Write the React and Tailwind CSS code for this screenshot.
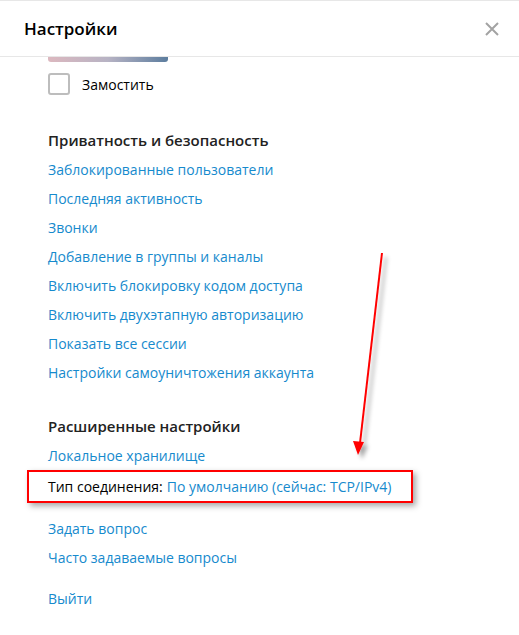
import React from "react";

const privacyLinks = [
  "Заблокированные пользователи",
  "Последняя активность",
  "Звонки",
  "Добавление в группы и каналы",
  "Включить блокировку кодом доступа",
  "Включить двухэтапную авторизацию",
  "Показать все сессии",
  "Настройки самоуничтожения аккаунта",
];

const Link = ({ children, className = "" }) => (
  <div className={`h-[29px] flex items-center text-[14px] text-[#168acd] ${className}`}>
    {children}
  </div>
);

const Heading = ({ children, className = "" }) => (
  <div className={`h-[29px] flex items-center text-[15px] font-semibold text-[#222] ${className}`}>
    {children}
  </div>
);

// red annotation arrow drawn over the panel
const Arrow = () => (
  <svg className="absolute left-0 top-0 pointer-events-none" width="519" height="635">
    <defs>
      <filter id="sh" x="-50%" y="-50%" width="200%" height="200%">
        <feDropShadow dx="4" dy="4" stdDeviation="2" floodColor="#000" floodOpacity="0.35" />
      </filter>
    </defs>
    <g filter="url(#sh)">
      <line x1="382" y1="252" x2="360" y2="442" stroke="#ff0000" strokeWidth="2" />
      <polygon points="358,454 353,440 364,441" fill="#ff0000" />
    </g>
  </svg>
);

export default function App() {
  return (
    <div
      className="relative w-[519px] h-[635px] bg-white overflow-hidden border-t border-[#e7e7e7]"
      style={{ fontFamily: '"Open Sans", sans-serif' }}
    >
      <div className="h-[56px] flex items-center justify-between pl-[24px] pr-[20px] border-b border-[#e7e7e7]">
        <div className="text-[17px] font-semibold text-black">Настройки</div>
        <svg width="14" height="14" viewBox="0 0 14 14">
          <path d="M1 1L13 13M13 1L1 13" stroke="#a3a3a3" strokeWidth="2" />
        </svg>
      </div>

      <div className="pl-[48px]">
        <div className="w-[120px] h-[5px] rounded-b-[3px] bg-gradient-to-r from-[#dcb8bf] via-[#b7b3c4] to-[#5c7d9e]" />

        <div className="mt-[11px] flex items-center h-[22px]">
          <div className="w-[22px] h-[22px] border-2 border-[#bdbdbd] rounded-[3px]" />
          <span className="ml-[12px] text-[14px] text-black">Замостить</span>
        </div>

        <Heading className="mt-[31px]">Приватность и безопасность</Heading>
        {privacyLinks.map((t) => (
          <Link key={t}>{t}</Link>
        ))}

        <Heading className="mt-[25px]">Расширенные настройки</Heading>
        <Link className="h-[26px]">Локальное хранилище</Link>

        <div className="-ml-[21px] w-[386px] h-[33px] flex items-center pl-[19px] border-2 border-[#ff0000] shadow-[3px_3px_6px_rgba(0,0,0,0.35)] text-[14px]">
          <span className="text-black">Тип соединения:</span>
          <span className="ml-[4px] text-[#168acd]">По умолчанию (сейчас: TCP/IPv4)</span>
        </div>

        <Link className="mt-[11px]">Задать вопрос</Link>
        <Link>Часто задаваемые вопросы</Link>
        <Link className="mt-[12px]">Выйти</Link>
      </div>

      <Arrow />
    </div>
  );
}
